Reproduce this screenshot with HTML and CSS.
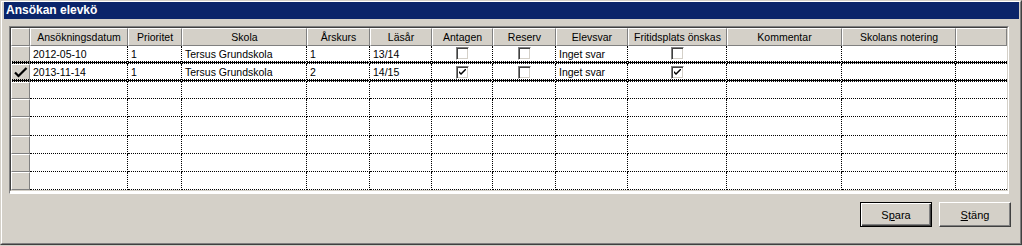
FILE: index.html
```html
<!DOCTYPE html>
<html>
    <head>
        <title>Ansökan elevkö</title>
        <link rel="stylesheet" href="styles.css">
    </head>
    <body>
        <div class="window">
            <div class="frame">
                <div class="titlebar">Ansökan elevkö</div>
                <div class="grid">
                    <table class="queue">
                        <colgroup>
                            <col class="c-ind">
                            <col class="c-date">
                            <col class="c-prio">
                            <col class="c-school">
                            <col class="c-grade">
                            <col class="c-year">
                            <col class="c-acc">
                            <col class="c-res">
                            <col class="c-answer">
                            <col class="c-free">
                            <col class="c-comment">
                            <col class="c-note">
                            <col class="c-rest">
                        </colgroup>
                        <thead>
                            <tr>
                                <th class="ind"></th>
                                <th>Ansökningsdatum</th>
                                <th>Prioritet</th>
                                <th>Skola</th>
                                <th>Årskurs</th>
                                <th>Läsår</th>
                                <th>Antagen</th>
                                <th>Reserv</th>
                                <th>Elevsvar</th>
                                <th>Fritidsplats önskas</th>
                                <th>Kommentar</th>
                                <th>Skolans notering</th>
                                <th></th>
                            </tr>
                        </thead>
                        <tbody>
                            <tr class="row-first">
                                <td class="ind"></td>
                                <td>2012-05-10</td>
                                <td>1</td>
                                <td>Tersus Grundskola</td>
                                <td>1</td>
                                <td>13/14</td>
                                <td class="center"><span class="check"></span></td>
                                <td class="center"><span class="check"></span></td>
                                <td>Inget svar</td>
                                <td class="center"><span class="check"></span></td>
                                <td></td>
                                <td></td>
                                <td></td>
                            </tr>
                            <tr class="row-selected">
                                <td class="ind">
                                    <svg class="tick" width="14" height="11" viewBox="0 0 14 11">
                                        <path d="M1 5.5 L4.5 9 L12.5 1" fill="none" stroke="#000" stroke-width="2.2"/>
                                    </svg>
                                </td>
                                <td>2013-11-14</td>
                                <td>1</td>
                                <td>Tersus Grundskola</td>
                                <td>2</td>
                                <td>14/15</td>
                                <td class="center"><span class="check"><svg width="7" height="7" viewBox="0 0 7 7"><path d="M0 2 L0 4 L2 6 L7 1 L7 -1 L2 4 Z" fill="#000"/></svg></span></td>
                                <td class="center"><span class="check"></span></td>
                                <td>Inget svar</td>
                                <td class="center"><span class="check"><svg width="7" height="7" viewBox="0 0 7 7"><path d="M0 2 L0 4 L2 6 L7 1 L7 -1 L2 4 Z" fill="#000"/></svg></span></td>
                                <td></td>
                                <td></td>
                                <td></td>
                            </tr>
                            <tr class="row-after"><td class="ind"></td><td></td><td></td><td></td><td></td><td></td><td></td><td></td><td></td><td></td><td></td><td></td><td></td></tr>
                            <tr><td class="ind"></td><td></td><td></td><td></td><td></td><td></td><td></td><td></td><td></td><td></td><td></td><td></td><td></td></tr>
                            <tr><td class="ind"></td><td></td><td></td><td></td><td></td><td></td><td></td><td></td><td></td><td></td><td></td><td></td><td></td></tr>
                            <tr><td class="ind"></td><td></td><td></td><td></td><td></td><td></td><td></td><td></td><td></td><td></td><td></td><td></td><td></td></tr>
                            <tr><td class="ind"></td><td></td><td></td><td></td><td></td><td></td><td></td><td></td><td></td><td></td><td></td><td></td><td></td></tr>
                            <tr><td class="ind"></td><td></td><td></td><td></td><td></td><td></td><td></td><td></td><td></td><td></td><td></td><td></td><td></td></tr>
                        </tbody>
                    </table>
                </div>
                <div class="actions">
                    <button class="btn default">S<u>p</u>ara</button>
                    <button class="btn"><u>S</u>täng</button>
                </div>
            </div>
        </div>
    </body>
</html>
```

FILE: styles.css
```css
html, body {
    margin: 0;
    padding: 0;
    background: #d4d0c8;
    font-family: "Liberation Sans", Arial, sans-serif;
    font-size: 10.5px;
    color: #000;
}

.window {
    width: 1022px;
    height: 245px;
    box-sizing: border-box;
    border: 1px solid;
    border-color: #d4d0c8 #404040 #404040 #d4d0c8;
    background: #d4d0c8;
}

.frame {
    height: 100%;
    box-sizing: border-box;
    border: 1px solid;
    border-color: #fff #808080 #808080 #fff;
    padding: 0 1px 0 2px;
}

.titlebar {
    height: 17px;
    line-height: 17px;
    background: #0a246a;
    color: #fff;
    font-weight: bold;
    font-size: 12px;
    padding-left: 2px;
}

/* grid box: sunken 2px frame */
.grid {
    margin: 7px 0 0 5px;
    width: 1000px;
    height: 168px;
    box-sizing: border-box;
    border: 1px solid;
    border-color: #808080 #fff #fff #808080;
    background: #fff;
}

.grid .queue {
    border: 1px solid;
    border-color: #404040 #d4d0c8 #d4d0c8 #404040;
}

.queue {
    width: 998px;
    height: 164px;
    box-sizing: border-box;
    table-layout: fixed;
    border-collapse: separate;
    border-spacing: 0;
}

.c-ind { width: 19px; }
.c-date { width: 98px; }
.c-prio { width: 54px; }
.c-school { width: 125px; }
.c-grade { width: 63px; }
.c-year { width: 62px; }
.c-acc { width: 61px; }
.c-res { width: 63px; }
.c-answer { width: 72px; }
.c-free { width: 99px; }
.c-comment { width: 115px; }
.c-note { width: 114px; }
.c-rest { width: auto; }

.queue th {
    height: 16px;
    padding: 0;
    background: #d4d0c8;
    font-weight: normal;
    text-align: center;
    white-space: nowrap;
    overflow: hidden;
    border-top: 1px solid #fff;
    border-left: 1px solid #fff;
    border-bottom: 1px solid #808080;
    border-right: 1px solid #808080;
}

.queue td {
    height: 17px;
    padding: 0 0 0 3px;
    white-space: nowrap;
    overflow: hidden;
    border-right: 1px dotted #000;
    border-bottom: 1px dotted #000;
    vertical-align: middle;
}

.queue td:last-child {
    border-right: none;
}

.queue td.ind {
    padding: 0;
    background-color: #d4d0c8;
    border-top: 1px solid #fff;
    border-left: 1px solid #fff;
    border-right: 1px solid #808080;
    border-bottom: 1px solid #808080;
    height: 15px;
    text-align: center;
}

/* current row: textured 3px band above and below */
.queue .row-first td,
.queue .row-selected td {
    height: 15px;
    padding-bottom: 3px;
    border-bottom: none;
    background-image:
        repeating-linear-gradient(90deg, #000 0 1px, transparent 1px 2px),
        linear-gradient(#000, #000),
        repeating-linear-gradient(90deg, #000 0 1px, transparent 1px 2px);
    background-size: 100% 1px;
    background-repeat: no-repeat;
    background-position: left bottom, left calc(100% - 1px), left calc(100% - 2px);
}

.queue .row-first td.ind,
.queue .row-selected td.ind {
    height: 14px;
    padding-bottom: 3px;
    border-bottom: none;
}

.queue .row-first td.center,
.queue .row-selected td.center {
    padding-bottom: 3px;
}

.queue .row-after td {
    height: 16px;
}

.queue .row-after td.ind {
    height: 14px;
}

.queue td.center {
    padding: 0;
    text-align: center;
}

.tick {
    display: block;
    margin: 1px auto 0;
}

.check {
    display: inline-block;
    width: 13px;
    height: 13px;
    box-sizing: border-box;
    vertical-align: middle;
    background: #fff;
    border: 1px solid;
    border-color: #808080 #fff #fff #808080;
    box-shadow: inset 1px 1px 0 #404040, inset -1px -1px 0 #d4d0c8;
    position: relative;
}

.check svg {
    position: absolute;
    left: 2px;
    top: 2px;
}

.actions {
    display: flex;
    justify-content: flex-end;
    gap: 7px;
    margin: 8px 8px 0 0;
}

.btn {
    width: 72px;
    height: 25px;
    box-sizing: border-box;
    padding: 0;
    margin: 0;
    background: #d4d0c8;
    font-family: "Liberation Sans", Arial, sans-serif;
    font-size: 11px;
    color: #000;
    border: 1px solid;
    border-color: #fff #404040 #404040 #fff;
    box-shadow: inset -1px -1px 0 #808080;
}

.btn.default {
    border: 1px solid #000;
    box-shadow: inset 1px 1px 0 #fff, inset -1px -1px 0 #404040, inset -2px -2px 0 #808080;
}
```
